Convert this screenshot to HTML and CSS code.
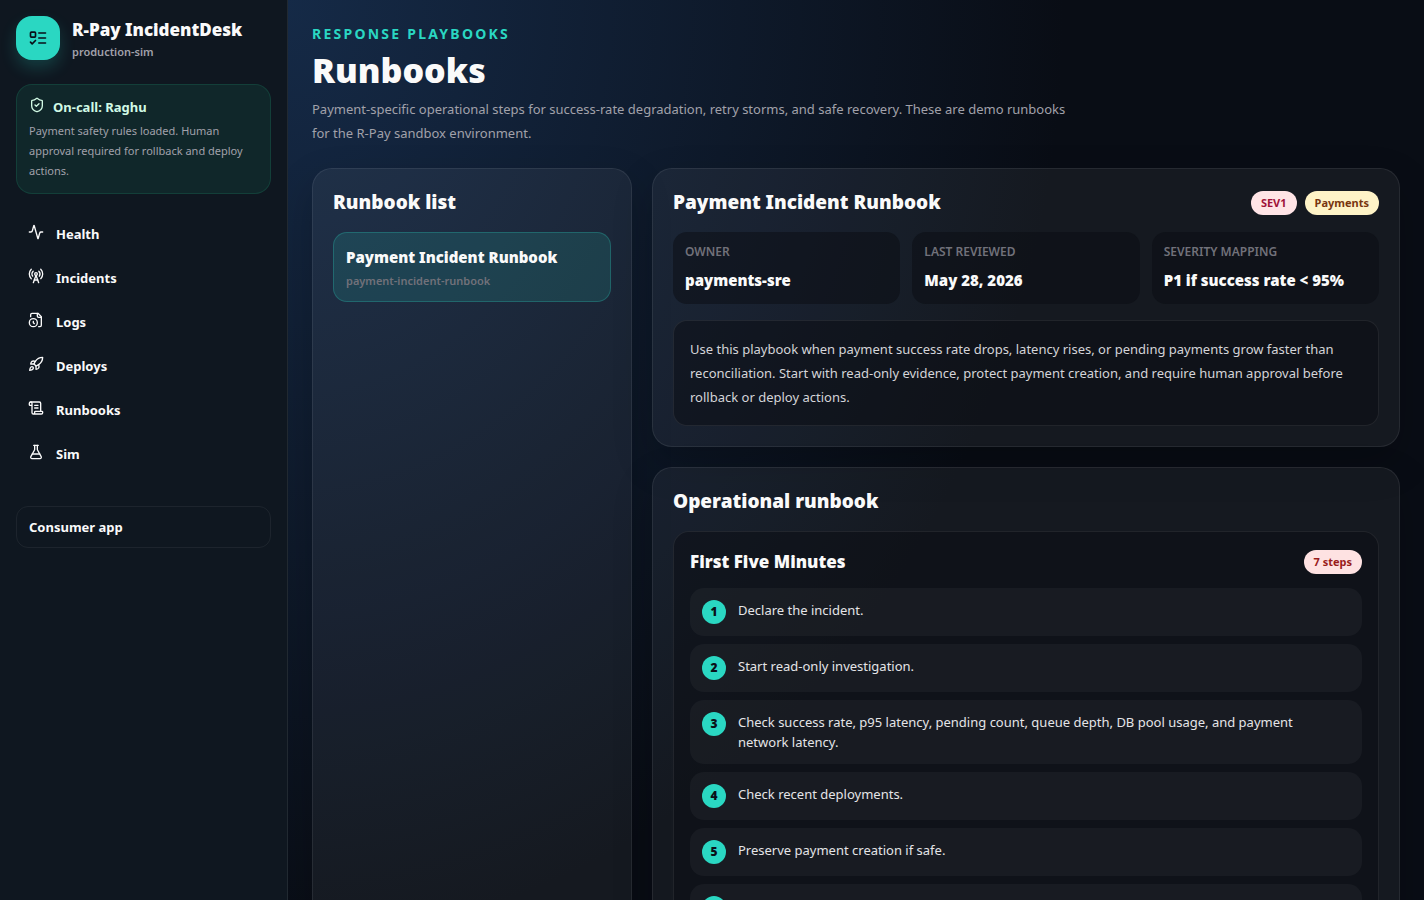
FILE: index.html
```
<!DOCTYPE html>
<html lang="en">
<head>
  <meta charset="UTF-8">
  <meta name="viewport" content="width=device-width, initial-scale=1.0">
  <title>Runbooks - R-Pay IncidentDesk</title>
  <link rel="stylesheet" href="styles.css">
</head>
<body>
  <div class="app">

    <aside class="sidebar">
      <div class="brand">
        <div class="brand-mark">
          <svg class="icon icon-lg" viewBox="0 0 24 24"><rect x="3" y="5" width="6" height="6" rx="1"/><path d="m3 17 2 2 4-4"/><path d="M13 6h8"/><path d="M13 12h8"/><path d="M13 18h8"/></svg>
        </div>
        <div>
          <div class="brand-name">R-Pay IncidentDesk</div>
          <div class="brand-env">production-sim</div>
        </div>
      </div>

      <div class="oncall">
        <div class="oncall-title">
          <svg class="icon" viewBox="0 0 24 24"><path d="M20 13c0 5-3.5 7.5-7.66 8.95a1 1 0 0 1-.67-.01C7.5 20.5 4 18 4 13V6a1 1 0 0 1 1-1c2 0 4.5-1.2 6.24-2.72a1.17 1.17 0 0 1 1.52 0C14.51 3.81 17 5 19 5a1 1 0 0 1 1 1z"/><path d="m9 12 2 2 4-4"/></svg>
          <span>On-call: Raghu</span>
        </div>
        <p>Payment safety rules loaded. Human approval required for rollback and deploy actions.</p>
      </div>

      <nav class="nav">
        <a href="#health">
          <svg class="icon" viewBox="0 0 24 24"><path d="M22 12h-2.48a2 2 0 0 0-1.93 1.46l-2.35 8.36a.25.25 0 0 1-.48 0L9.24 2.18a.25.25 0 0 0-.48 0l-2.35 8.36A2 2 0 0 1 4.49 12H2"/></svg>
          <span>Health</span>
        </a>
        <a href="#incidents">
          <svg class="icon" viewBox="0 0 24 24"><path d="M4.9 16.1C1 12.2 1 5.8 4.9 1.9"/><path d="M7.8 4.7a6.14 6.14 0 0 0-.8 7.5"/><circle cx="12" cy="9" r="2"/><path d="M16.2 4.8c2 2 2.26 5.11.8 7.47"/><path d="M19.1 1.9a9.96 9.96 0 0 1 0 14.1"/><path d="M9.5 18h5"/><path d="m8 22 4-11 4 11"/></svg>
          <span>Incidents</span>
        </a>
        <a href="#logs">
          <svg class="icon" viewBox="0 0 24 24"><path d="M16 22h2a2 2 0 0 0 2-2V7l-5-5H6a2 2 0 0 0-2 2v3"/><path d="M14 2v4a2 2 0 0 0 2 2h4"/><circle cx="8" cy="16" r="6"/><path d="M9.5 17.5 8 16.25V14"/></svg>
          <span>Logs</span>
        </a>
        <a href="#deploys">
          <svg class="icon" viewBox="0 0 24 24"><path d="M4.5 16.5c-1.5 1.26-2 5-2 5s3.74-.5 5-2c.71-.84.7-2.13-.09-2.91a2.18 2.18 0 0 0-2.91-.09z"/><path d="m12 15-3-3a22 22 0 0 1 2-3.95A12.88 12.88 0 0 1 22 2c0 2.72-.78 7.5-6 11a22.35 22.35 0 0 1-4 2z"/><path d="M9 12H4s.55-3.03 2-4c1.62-1.08 5 0 5 0"/><path d="M12 15v5s3.03-.55 4-2c1.08-1.62 0-5 0-5"/></svg>
          <span>Deploys</span>
        </a>
        <a href="#runbooks">
          <svg class="icon" viewBox="0 0 24 24"><path d="M15 12h-5"/><path d="M15 8h-5"/><path d="M19 17V5a2 2 0 0 0-2-2H4"/><path d="M8 21h12a2 2 0 0 0 2-2v-1a1 1 0 0 0-1-1H11a1 1 0 0 0-1 1v1a2 2 0 1 1-4 0V5a2 2 0 1 0-4 0v2a1 1 0 0 0 1 1h3"/></svg>
          <span>Runbooks</span>
        </a>
        <a href="#sim">
          <svg class="icon" viewBox="0 0 24 24"><path d="M14 2v6a2 2 0 0 0 .245.96l5.51 10.08A2 2 0 0 1 18 22H6a2 2 0 0 1-1.755-2.96l5.51-10.08A2 2 0 0 0 10 8V2"/><path d="M6.453 15h11.094"/><path d="M8.5 2h7"/></svg>
          <span>Sim</span>
        </a>
      </nav>

      <a class="consumer-link" href="#consumer">Consumer app</a>
    </aside>

    <main class="main">
      <header class="page-header">
        <p class="eyebrow">Response Playbooks</p>
        <h1>Runbooks</h1>
        <p class="lead">Payment-specific operational steps for success-rate degradation, retry storms, and safe recovery. These are demo runbooks for the R-Pay sandbox environment.</p>
      </header>

      <div class="layout">
        <section class="card">
          <h2>Runbook list</h2>
          <a class="runbook-item" href="#payment-incident-runbook">
            <strong>Payment Incident Runbook</strong>
            <span>payment-incident-runbook</span>
          </a>
        </section>

        <div class="column">
          <section class="card">
            <div class="card-head">
              <h2>Payment Incident Runbook</h2>
              <div class="badges">
                <span class="badge badge-rose">SEV1</span>
                <span class="badge badge-amber">Payments</span>
              </div>
            </div>
            <dl class="facts">
              <div class="fact">
                <dt>Owner</dt>
                <dd>payments-sre</dd>
              </div>
              <div class="fact">
                <dt>Last reviewed</dt>
                <dd>May 28, 2026</dd>
              </div>
              <div class="fact">
                <dt>Severity mapping</dt>
                <dd>P1 if success rate &lt; 95%</dd>
              </div>
            </dl>
            <p class="summary">Use this playbook when payment success rate drops, latency rises, or pending payments grow faster than reconciliation. Start with read-only evidence, protect payment creation, and require human approval before rollback or deploy actions.</p>
          </section>

          <section class="card">
            <h2>Operational runbook</h2>
            <div class="phase">
              <div class="phase-head">
                <h3>First Five Minutes</h3>
                <span class="badge badge-red">7 steps</span>
              </div>
              <ol class="steps">
                <li><span class="step-num">1</span><span class="step-text">Declare the incident.</span></li>
                <li><span class="step-num">2</span><span class="step-text">Start read-only investigation.</span></li>
                <li><span class="step-num">3</span><span class="step-text">Check success rate, p95 latency, pending count, queue depth, DB pool usage, and payment network latency.</span></li>
                <li><span class="step-num">4</span><span class="step-text">Check recent deployments.</span></li>
                <li><span class="step-num">5</span><span class="step-text">Preserve payment creation if safe.</span></li>
                <li><span class="step-num">6</span><span class="step-text">Pause aggressive retries.</span></li>
                <li><span class="step-num">7</span><span class="step-text">Post the first status update.</span></li>
              </ol>
            </div>
          </section>
        </div>
      </div>
    </main>

  </div>
</body>
</html>
```
FILE: styles.css
```
* {
  box-sizing: border-box;
}

body {
  margin: 0;
  min-height: 100vh;
  font-family: "Noto Sans", "Open Sans", sans-serif;
  font-size: 13px;
  line-height: 20px;
  color: #fafafa;
  background:
    radial-gradient(780px 940px at 20% 0, #152a47, transparent),
    #090d15;
}

h1, h2, h3, p, dl, dd, ol {
  margin: 0;
  padding: 0;
}

a {
  color: inherit;
  text-decoration: none;
}

.icon {
  width: 16px;
  height: 16px;
  flex-shrink: 0;
  fill: none;
  stroke: currentColor;
  stroke-width: 2;
  stroke-linecap: round;
  stroke-linejoin: round;
}

.icon-lg {
  width: 20px;
  height: 20px;
}

.app {
  display: grid;
  grid-template-columns: 288px minmax(0, 1fr);
}

/* sidebar */
.sidebar {
  position: sticky;
  top: 0;
  height: 100vh;
  padding: 16px;
  background: #0f1720;
  border-right: 1px solid rgba(255, 255, 255, 0.08);
}

.brand {
  display: flex;
  align-items: center;
  gap: 12px;
}

.brand-mark {
  display: grid;
  place-items: center;
  width: 44px;
  height: 44px;
  border-radius: 16px;
  color: #0a0f18;
  background: #2ad7c2;
  box-shadow: 0 8px 16px rgba(42, 215, 194, 0.2);
}

.brand-name {
  font-size: 17px;
  line-height: 28px;
  font-weight: 900;
}

.brand-env {
  font-size: 11px;
  line-height: 16px;
  font-weight: 600;
  color: #a1a1aa;
}

.oncall {
  margin-top: 24px;
  padding: 12px;
  border: 1px solid rgba(42, 215, 150, 0.14);
  border-radius: 16px;
  background: #10272a;
}

.oncall-title {
  display: flex;
  gap: 8px;
  margin-bottom: 4px;
  font-weight: 700;
  color: #d1fae5;
}

.oncall p {
  font-size: 11px;
  color: #a1a1aa;
}

.nav {
  display: grid;
  gap: 4px;
  margin-top: 20px;
}

.nav a {
  display: flex;
  gap: 12px;
  padding: 10px 12px;
  font-weight: 700;
  border-radius: 12px;
}

.consumer-link {
  display: block;
  margin-top: 32px;
  padding: 10px 12px;
  font-weight: 700;
  border: 1px solid rgba(255, 255, 255, 0.06);
  border-radius: 12px;
}

/* page */
.main {
  padding: 24px;
}

.page-header {
  max-width: 768px;
  margin-bottom: 23px;
}

.eyebrow {
  font-size: 14px;
  font-weight: 700;
  letter-spacing: 0.16em;
  text-transform: uppercase;
  color: #2ad7c2;
}

h1 {
  margin: 6px 0 7px;
  font-size: 34px;
  line-height: 40px;
  font-weight: 900;
}

h2 {
  font-size: 19px;
  line-height: 27px;
  font-weight: 900;
}

h3 {
  font-size: 17px;
  line-height: 28px;
  font-weight: 900;
}

.lead {
  line-height: 24px;
  color: #a1a1aa;
}

.layout {
  display: grid;
  grid-template-columns: 320px minmax(0, 1fr);
  gap: 20px;
}

.column {
  display: grid;
  gap: 20px;
}

.card {
  padding: 20px;
  border: 1px solid rgba(255, 255, 255, 0.08);
  border-radius: 20px;
  background: rgba(255, 255, 255, 0.05);
  box-shadow: 0 16px 40px rgba(0, 0, 0, 0.2);
}

.runbook-item {
  display: grid;
  gap: 4px;
  margin-top: 16px;
  padding: 12px;
  border: 1px solid rgba(42, 215, 194, 0.25);
  border-radius: 14px;
  background: rgba(42, 215, 194, 0.14);
}

.runbook-item strong {
  font-size: 15px;
  line-height: 24px;
  font-weight: 900;
}

.runbook-item span {
  font-size: 11px;
  line-height: 16px;
  font-weight: 600;
  color: #71717a;
}

.card-head,
.phase-head {
  display: flex;
  align-items: center;
  justify-content: space-between;
  gap: 12px;
}

.badges {
  display: flex;
  gap: 8px;
}

.badge {
  padding: 4px 10px;
  font-size: 11px;
  line-height: 16px;
  font-weight: 700;
  border-radius: 12px;
}

.badge-rose {
  color: #9f1239;
  background: #ffe4e6;
}

.badge-amber {
  color: #78350f;
  background: #fef3c7;
}

.badge-red {
  color: #991b1b;
  background: #fee2e2;
}

.facts {
  display: grid;
  grid-template-columns: repeat(3, minmax(0, 1fr));
  gap: 12px;
  margin-top: 16px;
}

.fact {
  padding: 12px;
  border-radius: 14px;
  background: rgba(9, 11, 17, 0.5);
}

.fact dt {
  font-size: 12px;
  line-height: 16px;
  font-weight: 600;
  text-transform: uppercase;
  color: #71717a;
}

.fact dd {
  margin-top: 8px;
  font-size: 15px;
  line-height: 24px;
  font-weight: 900;
}

.summary {
  margin-top: 16px;
  padding: 16px;
  line-height: 24px;
  color: #d4d4d8;
  border: 1px solid rgba(255, 255, 255, 0.08);
  border-radius: 14px;
  background: rgba(9, 11, 17, 0.5);
}

.phase {
  margin-top: 16px;
  padding: 16px;
  border: 1px solid rgba(255, 255, 255, 0.08);
  border-radius: 16px;
  background: rgba(9, 11, 17, 0.5);
}

.steps {
  display: grid;
  gap: 8px;
  margin-top: 12px;
  list-style: none;
}

.steps li {
  display: flex;
  gap: 12px;
  padding: 12px;
  border-radius: 14px;
  color: #e4e4e7;
  background: rgba(255, 255, 255, 0.04);
}

.step-text {
  max-width: 600px;
}

.step-num {
  display: grid;
  place-items: center;
  flex-shrink: 0;
  width: 24px;
  height: 24px;
  font-size: 12px;
  font-weight: 900;
  border-radius: 50%;
  color: #0a0f18;
  background: #2ad7c2;
}
```
